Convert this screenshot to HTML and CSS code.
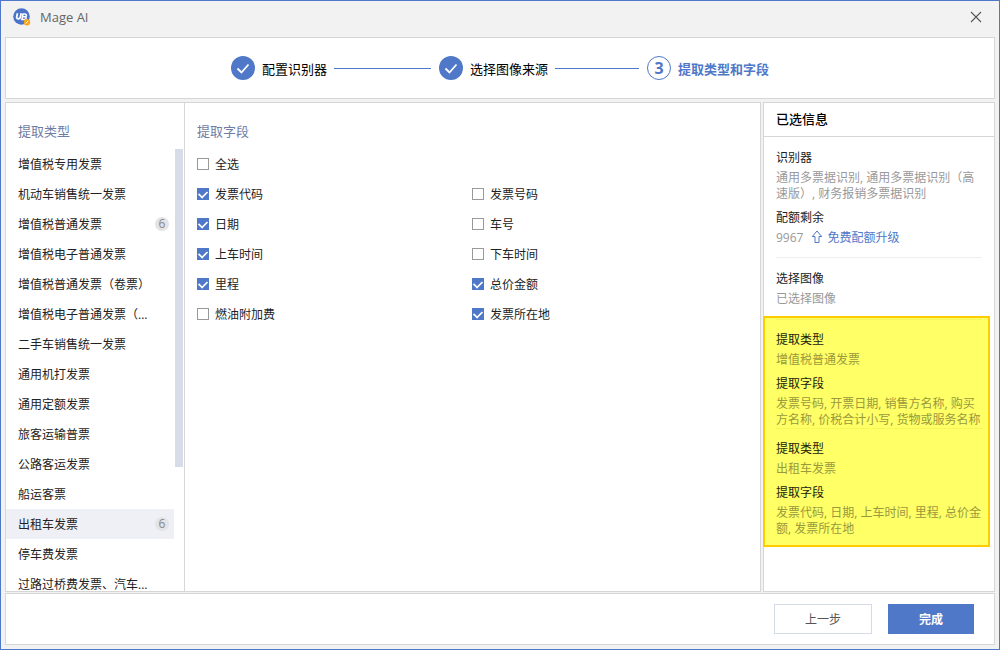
FILE: index.html
```html
<!DOCTYPE html>
<html lang="zh-CN">
<head>
<meta charset="utf-8">
<title>Mage AI</title>
<link rel="stylesheet" href="styles.css">
</head>
<body>
<div class="window">
  <header class="titlebar">
    <svg class="logo" viewBox="0 0 18 18" aria-hidden="true">
      <circle cx="8.500" cy="8.500" r="8.300" fill="#4a73c9"/>
      <path d="M4.500 5.300L3.700 8.800Q3.500 10.800 5.300 10.800Q7 10.800 7.400 9L8.200 5.300" fill="none" stroke="#fff" stroke-width="1.800"/>
      <path d="M10 5.900L8.900 11.600H11Q13 11.600 13.200 10.100Q13.300 9 12.200 8.800Q13.500 8.400 13.500 7.200Q13.400 5.900 11.800 5.900ZM9.600 8.800H12" fill="none" stroke="#fff" stroke-width="1.500"/>
      <circle cx="14" cy="14.300" r="3.200" fill="#f9a51a"/>
      <path d="M12.700 15.700L15.200 12.800" stroke="#fff" stroke-width="1"/>
    </svg>
    <h1 class="app-name">Mage AI</h1>
    <button class="close" type="button" aria-label="关闭">
      <svg viewBox="0 0 12 12" aria-hidden="true"><path d="M1 1L11 11M11 1L1 11" fill="none" stroke="#555" stroke-width="1.100"/></svg>
    </button>
  </header>

  <nav class="panel stepper">
    <ol class="steps">
      <li class="step">
        <svg class="dot" viewBox="0 0 24 24" aria-hidden="true"><circle cx="12" cy="12" r="12" fill="#4f78c8"/><path d="M6.500 12.500L10.500 16.500L17.500 8.500" fill="none" stroke="#fff" stroke-width="1.800"/></svg>
        <span>配置识别器</span><span class="line"></span>
      </li>
      <li class="step">
        <svg class="dot" viewBox="0 0 24 24" aria-hidden="true"><circle cx="12" cy="12" r="12" fill="#4f78c8"/><path d="M6.500 12.500L10.500 16.500L17.500 8.500" fill="none" stroke="#fff" stroke-width="1.800"/></svg>
        <span>选择图像来源</span><span class="line"></span>
      </li>
      <li class="step current" aria-current="step">
        <span class="dot number">3</span><span>提取类型和字段</span>
      </li>
    </ol>
  </nav>

  <main class="main">
    <div class="panel picker">
      <section class="types">
        <h2 class="column-title">提取类型</h2>
        <div class="scroller">
          <ul class="type-list">
            <li><button class="type" type="button"><span class="type-name">增值税专用发票</span></button></li>
            <li><button class="type" type="button"><span class="type-name">机动车销售统一发票</span></button></li>
            <li><button class="type" type="button"><span class="type-name">增值税普通发票</span><span class="count">6</span></button></li>
            <li><button class="type" type="button"><span class="type-name">增值税电子普通发票</span></button></li>
            <li><button class="type" type="button"><span class="type-name">增值税普通发票（卷票）</span></button></li>
            <li><button class="type" type="button"><span class="type-name">增值税电子普通发票（...</span></button></li>
            <li><button class="type" type="button"><span class="type-name">二手车销售统一发票</span></button></li>
            <li><button class="type" type="button"><span class="type-name">通用机打发票</span></button></li>
            <li><button class="type" type="button"><span class="type-name">通用定额发票</span></button></li>
            <li><button class="type" type="button"><span class="type-name">旅客运输普票</span></button></li>
            <li><button class="type" type="button"><span class="type-name">公路客运发票</span></button></li>
            <li><button class="type" type="button"><span class="type-name">船运客票</span></button></li>
            <li><button class="type selected" type="button"><span class="type-name">出租车发票</span><span class="count">6</span></button></li>
            <li><button class="type" type="button"><span class="type-name">停车费发票</span></button></li>
            <li><button class="type" type="button"><span class="type-name">过路过桥费发票、汽车...</span></button></li>
          </ul>
          <div class="thumb"></div>
        </div>
      </section>
      <section class="fields">
        <h2 class="column-title">提取字段</h2>
        <label class="field"><input type="checkbox">全选</label>
        <div class="field-grid">
          <label class="field"><input type="checkbox" checked>发票代码</label>
          <label class="field"><input type="checkbox">发票号码</label>
          <label class="field"><input type="checkbox" checked>日期</label>
          <label class="field"><input type="checkbox">车号</label>
          <label class="field"><input type="checkbox" checked>上车时间</label>
          <label class="field"><input type="checkbox">下车时间</label>
          <label class="field"><input type="checkbox" checked>里程</label>
          <label class="field"><input type="checkbox" checked>总价金额</label>
          <label class="field"><input type="checkbox">燃油附加费</label>
          <label class="field"><input type="checkbox" checked>发票所在地</label>
        </div>
      </section>
    </div>

    <aside class="panel summary">
      <h2 class="summary-title">已选信息</h2>
      <div class="summary-body">
        <dl class="group">
          <dt>识别器</dt>
          <dd>通用多票据识别, 通用多票据识别（高速版）, 财务报销多票据识别</dd>
          <dt>配额剩余</dt>
          <dd class="quota">9967
            <a class="upgrade" href="#"><svg viewBox="0 0 12 14" aria-hidden="true"><path d="M6 1L10.700 6.500H8V12.500H4V6.500H1.300Z" fill="none" stroke="#4f78c8"/></svg>免费配额升级</a>
          </dd>
        </dl>
        <dl class="group">
          <dt>选择图像</dt>
          <dd>已选择图像</dd>
        </dl>
      </div>
      <div class="marked">
        <dl class="group">
          <dt>提取类型</dt>
          <dd>增值税普通发票</dd>
          <dt>提取字段</dt>
          <dd>发票号码, 开票日期, 销售方名称, 购买方名称, 价税合计小写, 货物或服务名称</dd>
        </dl>
        <dl class="group">
          <dt>提取类型</dt>
          <dd>出租车发票</dd>
          <dt>提取字段</dt>
          <dd>发票代码, 日期, 上车时间, 里程, 总价金额, 发票所在地</dd>
        </dl>
      </div>
    </aside>
  </main>

  <footer class="panel footer">
    <button class="btn" type="button">上一步</button>
    <button class="btn primary" type="button">完成</button>
  </footer>
</div>
</body>
</html>
```
FILE: styles.css
```css
* { box-sizing: border-box; }

body, h1, h2, ul, ol, dl, dd { margin: 0; padding: 0; }

ul, ol { list-style: none; }

body, button, input {
  font-family: "Open Sans", "Noto Sans CJK SC", sans-serif;
  font-size: 12px;
  color: #222;
}

.window {
  display: flex;
  flex-direction: column;
  height: 100vh;
  padding: 0 4px 4px;
  border: 1px solid #4f78c8;
  background: #f2f2f2;
}

.panel {
  border: 1px solid #d6d6d6;
  background: #fff;
}

.titlebar {
  display: flex;
  align-items: center;
  gap: 9px;
  height: 36px;
  padding: 0 13px 4px 8px;
}

.logo { width: 18px; height: 18px; }

.app-name {
  flex: 1;
  font-size: 13px;
  font-weight: 400;
  color: #666;
}

.close {
  display: flex;
  padding: 0;
  border: 0;
  background: none;
}

.close svg { width: 12px; height: 12px; }

.stepper {
  display: flex;
  justify-content: center;
  height: 62px;
  margin-bottom: 3px;
}

.steps {
  display: flex;
  align-items: center;
  gap: 8px;
  font-size: 13px;
  color: #000;
}

.step {
  display: flex;
  align-items: center;
  gap: 7px;
  width: 200px;
  white-space: nowrap;
}

.dot { width: 24px; height: 24px; }

.number {
  display: flex;
  align-items: center;
  justify-content: center;
  border: 1px solid #4f78c8;
  border-radius: 50%;
  font-size: 16px;
}

.line {
  flex: 1;
  height: 1px;
  background: #4f78c8;
}

.current {
  width: auto;
  font-weight: 700;
  color: #4f78c8;
}

.main {
  display: flex;
  flex: 1;
  gap: 2px;
  min-height: 0;
  margin-bottom: 1px;
}

.picker {
  display: flex;
  flex: 1;
  min-width: 0;
}

.types {
  display: flex;
  flex-direction: column;
  width: 179px;
  border-right: 1px solid #d6d6d6;
}

.column-title {
  padding: 18px 12px 8px;
  font-size: 13px;
  font-weight: 400;
  line-height: 20px;
  color: #6f7ca3;
}

.scroller {
  display: flex;
  flex: 1;
  gap: 1px;
  min-height: 0;
  padding-right: 1px;
  overflow: hidden;
}

.type-list { flex: 1; }

.type {
  display: flex;
  align-items: center;
  justify-content: space-between;
  width: 100%;
  height: 30px;
  padding: 0 5px 0 12px;
  border: 0;
  background: none;
  white-space: nowrap;
}

.selected { background: #eff0f5; }

.count {
  width: 14px;
  height: 14px;
  border-radius: 50%;
  background: #e3e4e7;
  line-height: 14px;
  text-align: center;
  color: #888;
}

.thumb {
  width: 8px;
  height: 72%;
  background: #d8dce8;
}

.fields {
  flex: 1;
  padding-right: 13px;
}

.field-grid {
  display: grid;
  grid-template-columns: 1fr 1fr;
  margin-left: 12px;
}

.field {
  display: flex;
  align-items: center;
  gap: 6px;
  height: 30px;
}

.fields > .field { margin-left: 12px; }

.field input {
  width: 12px;
  height: 12px;
  margin: 0;
  border: 1px solid #999;
  background: #fff;
  appearance: none;
}

.field input:checked {
  display: grid;
  place-items: center;
  border-color: #4f78c8;
  background: #4f78c8;
}

.field input:checked::before {
  content: "";
  width: 8px;
  height: 5px;
  margin-bottom: 2px;
  border: solid #fff;
  border-width: 0 0 2px 2px;
  transform: rotate(-45deg) scale(0.85);
}

.summary { width: 232px; }

.summary-title {
  padding: 0 12px;
  border-bottom: 1px solid #d6d6d6;
  font-size: 13px;
  font-weight: 500;
  line-height: 33px;
  color: #000;
}

.summary-body { padding: 0 12px 9px; }

.group { padding-top: 11px; }

dt { line-height: 20px; }

dd {
  margin-top: 2px;
  line-height: 16px;
  color: #999;
}

dd + dt { margin-top: 6px; }

.summary-body .group + .group {
  margin-top: 11px;
  border-top: 1px solid #efefef;
}

.quota {
  display: flex;
  gap: 8px;
}

.upgrade {
  display: flex;
  gap: 4px;
  color: #4f78c8;
  text-decoration: none;
}

.upgrade svg { width: 12px; height: 14px; }

.marked {
  margin: 0 4px 0 -1px;
  padding: 1px 6px 8px 11px;
  border: 2px solid #fc0;
  background: #ff6;
}

.marked .group {
  padding-top: 10px;
  border-top: 1px solid #f6f65c;
}

.marked dt { color: #222209; }

.marked dd { color: #99993d; }

.footer {
  display: flex;
  align-items: center;
  justify-content: flex-end;
  gap: 16px;
  height: 52px;
  padding-right: 20px;
}

.btn {
  width: 98px;
  height: 30px;
  border: 1px solid #d5dbe7;
  background: #fff;
  color: #555;
}

.primary {
  width: 86px;
  border-color: #4f78c8;
  background: #4f78c8;
  font-weight: 700;
  color: #fff;
}
```
